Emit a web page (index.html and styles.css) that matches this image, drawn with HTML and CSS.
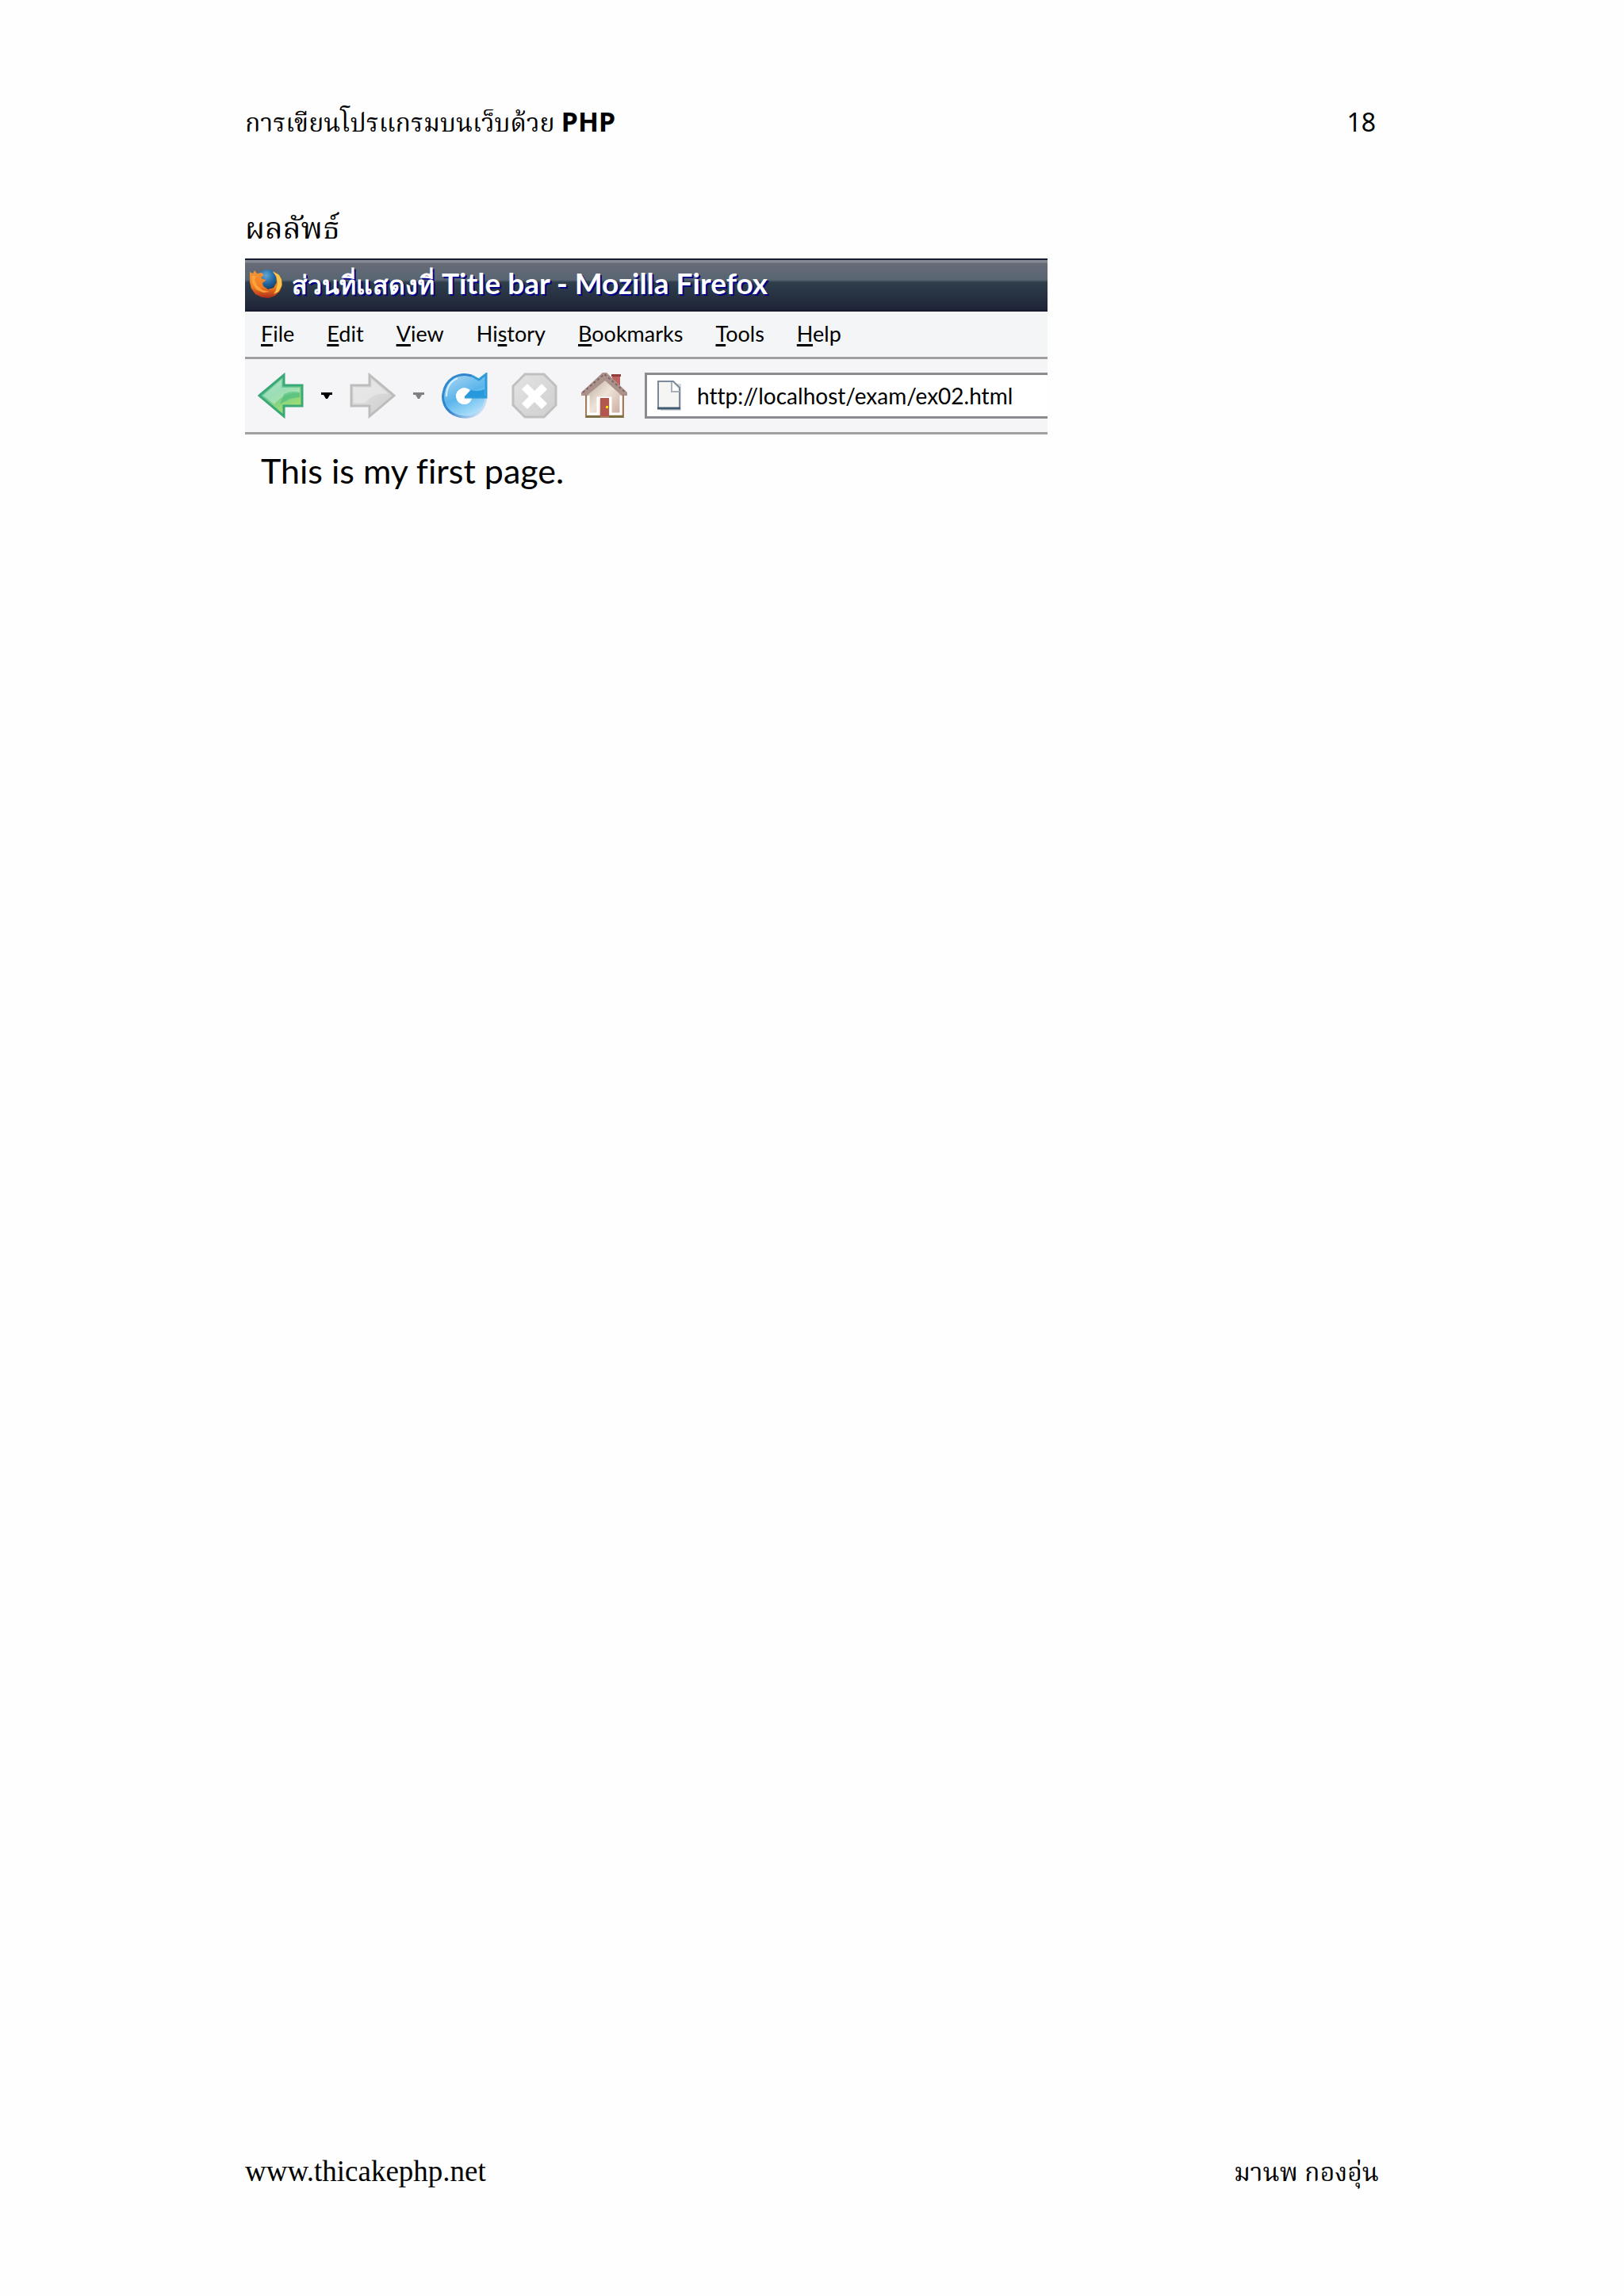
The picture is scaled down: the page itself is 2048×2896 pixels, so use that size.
FILE: index.html
```html
<!DOCTYPE html>
<html lang="th">
<head>
  <meta charset="UTF-8">
  <meta name="viewport" content="width=device-width, initial-scale=1">
  <title>การเขียนโปรแกรมบนเว็บด้วย PHP</title>
  <link rel="stylesheet" href="styles.css">
</head>
<body>

<header class="page-header">
  <p class="thai">การเขียนโปรแกรมบนเว็บด้วย <b class="php">PHP</b></p>
  <span class="page-number">18</span>
</header>

<main>
  <h1 class="thai">ผลลัพธ์</h1>

  <div class="browser">
    <div class="title-bar">
      <svg class="logo" viewBox="0 0 42 36" aria-hidden="true">
        <defs>
          <radialGradient id="globe" cx="45%" cy="25%" r="70%">
            <stop offset="0" stop-color="#5fa8d8"/>
            <stop offset="0.5" stop-color="#24669f"/>
            <stop offset="1" stop-color="#12304f"/>
          </radialGradient>
          <linearGradient id="fox" x1="0" y1="0" x2="0" y2="1">
            <stop offset="0" stop-color="#f0973a"/>
            <stop offset="0.6" stop-color="#f47c20"/>
            <stop offset="1" stop-color="#a92a1c"/>
          </linearGradient>
        </defs>
        <circle cx="23" cy="15" r="15" fill="url(#globe)"/>
        <path d="M1 3 L5 5 L7 1 L10 5 L16 4 L19 7 L15 10 L17 12 L22 13 L17 17 L18 21 L24 25 L31 23 L35 16 L34 8 L30 3 L37 6 L41 12 L42 19 L39 27 L33 33 L25 36 L16 35 L8 31 L3 24 L1 16 Z" fill="url(#fox)"/>
        <path d="M30 2 L38 7 L41 13 L41 21 L37 28 L31 31 L34 26 L36 18 L35 10 Z" fill="#f7c64a"/>
        <path d="M3 8 L9 8 L7 13 L10 20 L17 26 L26 28 L18 29 L9 25 L4 17 Z" fill="#fba33a"/>
      </svg>
      <span class="title"><span class="title-thai">ส่วนที่แสดงที่</span> Title bar - Mozilla Firefox</span>
    </div>

    <nav class="menu">
      <button><u>F</u>ile</button>
      <button><u>E</u>dit</button>
      <button><u>V</u>iew</button>
      <button>Hi<u>s</u>tory</button>
      <button><u>B</u>ookmarks</button>
      <button><u>T</u>ools</button>
      <button><u>H</u>elp</button>
    </nav>

    <div class="toolbar">
      <button aria-label="Back">
        <svg class="icon" viewBox="0 0 58 58">
          <defs>
            <linearGradient id="green" x1="0" y1="0" x2="0.5" y2="1">
              <stop offset="0" stop-color="#a5e3bf"/>
              <stop offset="0.5" stop-color="#6cc997"/>
              <stop offset="1" stop-color="#a9e06c"/>
            </linearGradient>
          </defs>
          <path d="M2 29 L33 3 V16 H56 V42 H33 V55 Z" fill="url(#green)" stroke="#3aa877" stroke-width="3"/>
          <path d="M7 29 L30 9 V19 H53 V26 Q32 25 21 40 Z" fill="#c8f2d6" opacity="0.5"/>
          <path d="M33 27 Q42 22 53 25 V31 Q38 32 28 40 Z" fill="#35b575" opacity="0.5"/>
        </svg>
      </button>
      <button aria-label="Back history">
        <svg class="caret" viewBox="0 0 14 8"><path d="M0 0 H14 V3 H11 L8 8 H6 L3 3 H0 Z" fill="#000"/></svg>
      </button>
      <button aria-label="Forward">
        <svg class="icon" viewBox="0 0 58 58">
          <defs>
            <linearGradient id="grey" x1="0" y1="0" x2="1" y2="1">
              <stop offset="0" stop-color="#e4e4e4"/>
              <stop offset="1" stop-color="#cecece"/>
            </linearGradient>
          </defs>
          <path d="M56 29 L25 3 V16 H2 V42 H25 V55 Z" fill="url(#grey)" stroke="#bdbdbd" stroke-width="3"/>
          <path d="M5 19 H28 V9 L49 27 Q30 24 20 38 H5 Z" fill="#ececec" opacity="0.6"/>
        </svg>
      </button>
      <button aria-label="Forward history">
        <svg class="caret" viewBox="0 0 14 8"><path d="M0 0 H14 V3 H11 L8 8 H6 L3 3 H0 Z" fill="#808080"/></svg>
      </button>
      <button aria-label="Reload">
        <svg class="icon" viewBox="0 0 58 58">
          <defs>
            <linearGradient id="blue" x1="0.2" y1="0" x2="0.7" y2="1">
              <stop offset="0" stop-color="#a9d4f1"/>
              <stop offset="0.5" stop-color="#5ab5ec"/>
              <stop offset="1" stop-color="#b9e5fb"/>
            </linearGradient>
            <linearGradient id="rim" x1="0" y1="0" x2="1" y2="0.6">
              <stop offset="0" stop-color="#2b8fd0"/>
              <stop offset="0.5" stop-color="#3480cb"/>
              <stop offset="1" stop-color="#c3dcf3"/>
            </linearGradient>
          </defs>
          <path d="M56 31 H29 L36 22 Q31 18 25 20 Q18 23 18 30 Q19 39 28 40 Q34 40 37 35 L39 31 H56 Q55 43 47 50 Q39 57 28 56 Q14 55 7 46 Q0 37 2 26 Q4 13 15 6 Q31 -2 46 8 L51 8 L56 3 Z" fill="url(#blue)"/>
          <path d="M29 30 L35 22 Q30 18 25 20 Q18 23 18 30 Q19 39 28 40 Q34 40 37 35 H33 Q29 34 29 30 Z" fill="#fff"/>
          <path d="M56 31 Q55 43 47 50 Q39 57 28 56 Q14 55 7 46 Q0 37 2 26 Q4 13 15 6 Q26 0 38 4" fill="none" stroke="url(#rim)" stroke-width="3"/>
          <path d="M38 4 L47 9 L56 2 V31 H29" fill="none" stroke="#2d9bd8" stroke-width="3"/>
          <path d="M29 30 L37 22 Q45 25 54 21 V30 Z" fill="#2698dc"/>
          <path d="M6 30 Q6 13 20 7" fill="none" stroke="#d4efff" stroke-width="2"/>
        </svg>
      </button>
      <button class="wide" aria-label="Stop">
        <svg class="icon" viewBox="0 0 58 58">
          <path d="M17 2 H41 L56 17 V41 L41 56 H17 L2 41 V17 Z" fill="url(#grey)" stroke="#c0c0c0" stroke-width="3"/>
          <path d="M20 14 L29 23 L38 14 L45 21 L36 30 L45 39 L38 46 L29 37 L20 46 L13 39 L22 30 L13 21 Z" fill="#fff"/>
        </svg>
      </button>
      <button class="wide" aria-label="Home">
        <svg class="icon" viewBox="0 0 58 58">
          <defs>
            <linearGradient id="wall" x1="0" y1="0" x2="1" y2="1">
              <stop offset="0" stop-color="#b29c90"/>
              <stop offset="0.5" stop-color="#eee3d9"/>
              <stop offset="1" stop-color="#c5a595"/>
            </linearGradient>
          </defs>
          <path d="M39 3 H49 V17 H39 Z" fill="#bd625d"/>
          <path d="M38 2 H50 V5 H38 Z" fill="#8d3e3d"/>
          <path d="M6 22 L29 3 L52 22 V55 H6 Z" fill="url(#wall)"/>
          <path d="M0 25 L27 0 H32 L58 25 V29 H51 L30 10 L7 29 H0 Z" fill="#aa918b"/>
          <path d="M2 25 L29 2 L56 25" fill="none" stroke="#7e6762" stroke-width="2" stroke-dasharray="3 3"/>
          <path d="M9 29 V52 H21 V32 H37 V52 H50 V29" fill="none" stroke="#fff" stroke-width="3"/>
          <path d="M24 32 H35 V55 H24 Z" fill="#b1574e"/>
          <path d="M6 28 V56 H53 V28" fill="none" stroke="#a47c5b" stroke-width="2"/>
          <path d="M6 54 H24 V57 H6 Z M35 54 H53 V57 H35 Z" fill="#7d7040"/>
          <path d="M31 42 H34 V45 H31 Z" fill="#f3e600"/>
        </svg>
      </button>
      <label class="address">
        <svg class="file" viewBox="0 0 32 38" aria-hidden="true">
          <path d="M4 4 H30 V38 H4 Z" fill="#d5d9dd"/>
          <path d="M1 1 H20 L28 9 V35 H1 Z" fill="#f5f5f3" stroke="#7b8b9b" stroke-width="2"/>
          <path d="M18 2 V14 H28" fill="#fff" stroke="#a8b0b8" stroke-width="2"/>
          <path d="M0 35 H29" stroke="#415a70" stroke-width="3"/>
        </svg>
        <input type="text" aria-label="Address" value="http://localhost/exam/ex02.html">
      </label>
    </div>

    <p class="content">This is my first page.</p>
  </div>
</main>

<footer class="page-footer">
  <span class="site">www.thicakephp.net</span>
  <span class="thai">มานพ กองอุ่น</span>
</footer>

</body>
</html>
```

FILE: styles.css
```css
* {
  box-sizing: border-box;
}
body {
  display: flex;
  flex-direction: column;
  min-height: 100vh;
  margin: 0;
  padding: 128px 309px;
  background: #fefefe;
  color: #000;
  font-family: "Liberation Serif", serif;
  font-size: 37px;
}
p, h1 {
  margin: 0;
}
main {
  flex: 1;
}
button, input {
  padding: 0;
  border: none;
  background: none;
  color: inherit;
  font: inherit;
}
svg {
  display: block;
}
.page-header, .page-footer {
  display: flex;
  justify-content: space-between;
  align-items: baseline;
  line-height: 50px;
}
.page-header {
  padding-right: 4px;
}
.thai {
  font-family: "Noto Serif Thai", "Liberation Serif", serif;
  font-size: 32px;
  font-weight: normal;
}
.php {
  font-family: "Noto Sans", sans-serif;
  font-size: 34px;
}
.page-number {
  font-family: "Noto Sans", sans-serif;
  font-size: 32px;
}
h1.thai {
  margin-top: 76px;
  margin-bottom: 3px;
  font-size: 38px;
  line-height: 64px;
}

/* browser window */
.browser {
  max-width: 1012px;
  font-family: Lato, sans-serif;
  font-size: 28px;
  font-variant-ligatures: none;
}
.title-bar {
  display: flex;
  align-items: center;
  gap: 12px;
  height: 67px;
  padding: 0 5px 4px;
  border: 2px solid #171c30;
  border-width: 2px 0;
  background: linear-gradient(#858a95 0, #858a95 3px, #676b77 4px, #596572 25px, #303e4b 28px, #1e2438 100%);
  color: #fff;
}
.logo {
  width: 42px;
  height: 36px;
}
.title {
  font-size: 37px;
  font-weight: bold;
  line-height: 50px;
  text-shadow: 2px 2px 0 #00008c;
  white-space: nowrap;
}
.title-thai {
  font-size: 32px;
}
.menu {
  display: flex;
  gap: 41px;
  padding: 8px 20px 9px;
  background: #f4f5f6;
}
.menu button {
  font-size: 27px;
  line-height: 40px;
}
.menu u {
  text-decoration-thickness: 3px;
  text-underline-offset: 3px;
}
.toolbar {
  display: flex;
  align-items: center;
  gap: 22px;
  height: 98px;
  padding-left: 16px;
  border: 3px solid #a0a0a2;
  border-width: 3px 0;
  background: #f5f5f7;
}
.wide {
  margin-left: 8px;
}
.icon {
  width: 58px;
  height: 58px;
}
.caret {
  width: 14px;
  height: 8px;
}
.address {
  display: flex;
  flex: 1;
  align-items: center;
  gap: 18px;
  height: 58px;
  padding-left: 13px;
  border: 3px solid #8c8c90;
  border-right: none;
  background: #fff;
}
.address input {
  flex: 1;
  min-width: 0;
}
.file {
  width: 32px;
  height: 38px;
}
.content {
  padding: 16px 20px;
  font-size: 43px;
  line-height: 60px;
}
```
